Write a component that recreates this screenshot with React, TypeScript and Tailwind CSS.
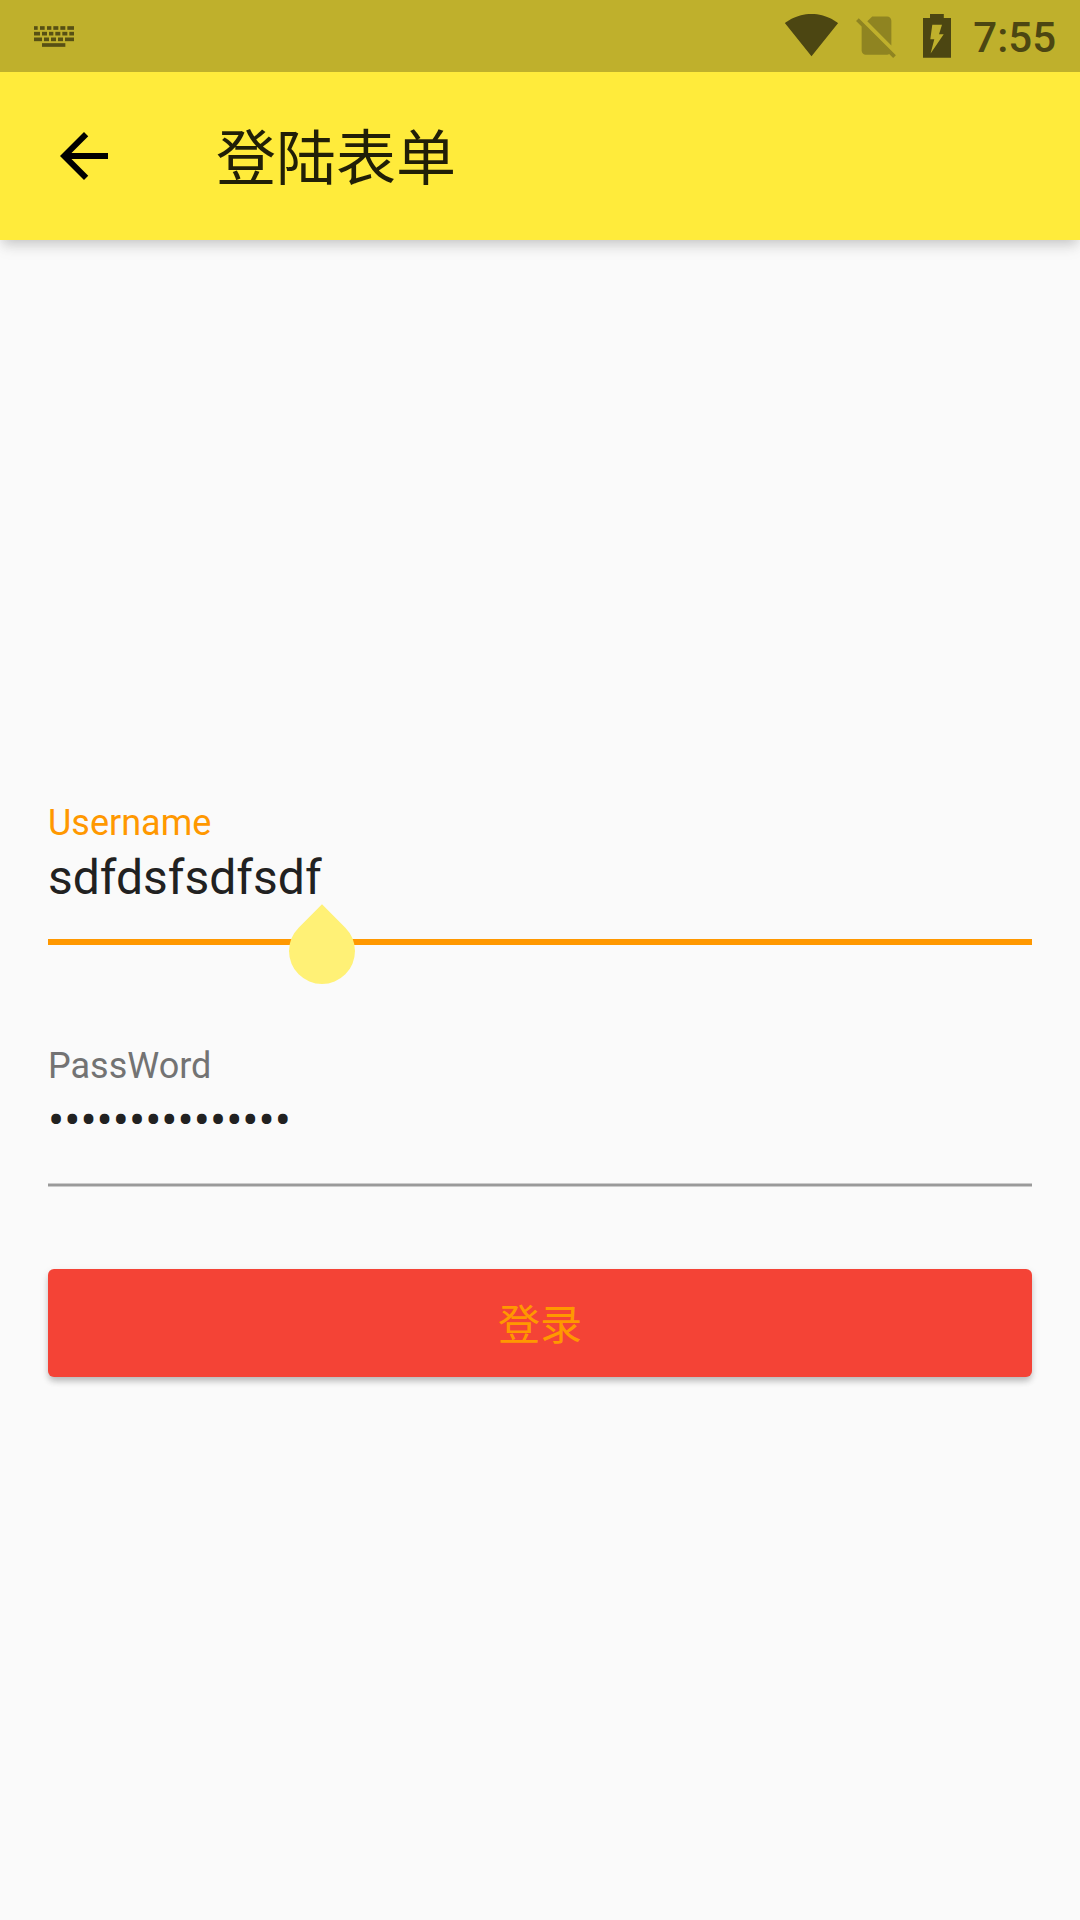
const keyRows: [number, number[][]][] = [
  [78.5, [[102, 113], [120, 134], [141, 154], [160, 175], [181, 196], [202, 222]]],
  [95.5, [[102, 120], [126, 141], [147, 160], [166, 181], [187, 202], [208, 222]]],
  [112.5, [[102, 126], [132, 147], [153, 168], [174, 189], [195, 222]]],
  [129.5, [[126, 196]]],
];

function KeyboardIcon() {
  return (
    <svg className="h-6 w-[42px]" viewBox="99 75 126 72" fill="currentColor">
      {keyRows.map(([y, keys]) =>
        keys.map(([from, to]) => (
          <rect key={`${y}-${from}`} x={from} y={y} width={to - from} height={11} />
        )),
      )}
    </svg>
  );
}

function StatusBar() {
  return (
    <div className="flex h-[72px] items-start bg-[#bfb02c] text-[#4c4612]">
      <div className="mt-[25px] ml-[33px] flex flex-1 opacity-90">
        <KeyboardIcon />
      </div>
      <svg className="mt-[7px] h-[55px] w-[55px]" viewBox="0 0 24 24" fill="currentColor">
        <path d="M12.01 21.49L23.64 7c-.45-.34-4.93-4-11.64-4C5.28 3 .81 6.66.36 7l11.63 14.49.01.01.01-.01z" />
      </svg>
      <svg className="mt-[10px] ml-3 h-[51px] w-[51px] text-[#8f8421]" viewBox="0 0 24 24" fill="currentColor">
        <path d="M18.99 5c0-1.1-.89-2-1.99-2h-7L7.66 5.34 19 16.68 18.99 5zM3.65 3.88L2.38 5.15 5 7.77V19c0 1.1.9 2 2 2h10.01c.35 0 .67-.1.96-.26l1.88 1.88 1.27-1.27L3.65 3.88z" />
      </svg>
      <svg className="mt-[14px] ml-[21px] h-11 w-7" viewBox="0 0 28 44" fill="currentColor">
        <path
          fillRule="evenodd"
          d="M7 0h13.8v4H28v39.7H0V4h7zM9.3 10.7h9.7L16 20.3h4.7L7.6 39.4 11.3 25.3H7.3z"
        />
      </svg>
      <span className="mt-[13px] mr-6 ml-[22px] text-[42px] leading-[49px] font-medium">7:55</span>
    </div>
  );
}

function AppBar() {
  return (
    <header className="flex h-[168px] items-center bg-[#ffeb3b]">
      <button className="ml-12" aria-label="返回">
        <svg className="h-[72px] w-[72px]" viewBox="0 0 24 24" fill="#000">
          <path d="M20 11H7.83l5.59-5.59L12 4l-8 8 8 8 1.41-1.41L7.83 13H20v-2z" />
        </svg>
      </button>
      <h1 className="mt-2 ml-24 text-[60px] leading-[70px] text-black/87">登陆表单</h1>
    </header>
  );
}

export default function App() {
  return (
    <div className="flex h-[1920px] w-[1080px] flex-col overflow-hidden bg-[#fafafa] font-['Roboto','Noto_Sans_CJK_SC',sans-serif]">
      <div className="shadow-[0_6px_12px_-3px_rgba(0,0,0,0.18),0_9px_15px_0_rgba(0,0,0,0.05)]">
        <StatusBar />
        <AppBar />
      </div>
      <main className="flex flex-col px-12 pt-[562px]">
        <label className="block h-[143px] border-b-[6px] border-[#ff9800]">
          <span className="block text-[36px] leading-[42px] text-[#ff9800]">Username</span>
          <span className="relative mt-[6px] block w-fit text-[48px] leading-[56px] text-[#212121]">
            sdfdsfsdfsdf
            <i className="absolute top-[68px] -right-[33px] h-[66px] w-[66px] rotate-45 rounded-full rounded-tl-none bg-[#fff176]" />
          </span>
        </label>
        <label className="mt-[100px] block h-[142px]">
          <span className="block text-[36px] leading-[42px] text-[#737373]">PassWord</span>
          <span className="mt-[6px] block text-[48px] leading-[56px] text-[#212121]">•••••••••••••••</span>
        </label>
        <div className="-mt-1 h-1 border-y border-[#cbcbcb] bg-[#9a9a9a]" />
        <button className="mt-[82px] flex h-[108px] items-center justify-center rounded-md bg-[#f44336] pt-1 text-[42px] leading-[49px] text-[#ff9800] shadow-[0_5px_6px_-1px_rgba(0,0,0,0.2),0_3px_9px_0_rgba(0,0,0,0.1)]">
          登录
        </button>
      </main>
    </div>
  );
}
